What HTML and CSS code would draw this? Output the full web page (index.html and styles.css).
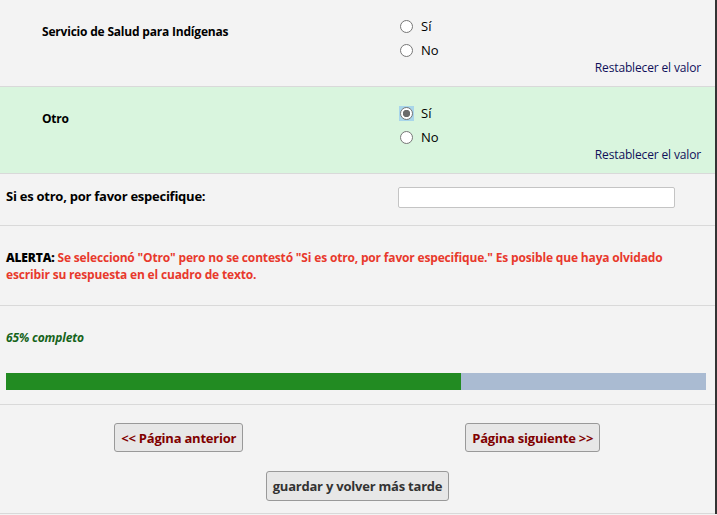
FILE: index.html
```html
<!DOCTYPE html>
<html lang="es">
<head>
  <meta charset="UTF-8">
  <meta name="viewport" content="width=device-width, initial-scale=1.0">
  <title>Encuesta</title>
  <link rel="stylesheet" href="styles.css">
</head>
<body>
  <div class="survey">
    <div class="row">
      <div class="q q-sub">Servicio de Salud para Indígenas</div>
      <div class="ans">
        <div class="opt"><span class="radio"></span>Sí</div>
        <div class="opt"><span class="radio"></span>No</div>
        <div class="reset"><a href="#">Restablecer el valor</a></div>
      </div>
    </div>

    <div class="row row-hl">
      <div class="q q-sub">Otro</div>
      <div class="ans">
        <div class="opt"><span class="focus"><span class="radio on"></span></span>Sí</div>
        <div class="opt"><span class="radio"></span>No</div>
        <div class="reset"><a href="#">Restablecer el valor</a></div>
      </div>
    </div>

    <div class="row row-text">
      <div class="q">Si es otro, por favor especifique:</div>
      <div class="ans"><input type="text" class="txt"></div>
    </div>

    <div class="alert">
      <b>ALERTA:</b> <span>Se seleccionó "Otro" pero no se contestó "Si es otro, por favor especifique." Es posible que haya olvidado escribir su respuesta en el cuadro de texto.</span>
    </div>

    <div class="progress">
      <p class="pct">65% completo</p>
      <div class="bar"><div class="fill" style="width:65%"></div></div>
    </div>

    <div class="nav">
      <div class="nav-cell"><button class="btn">&lt;&lt; Página anterior</button></div>
      <div class="nav-cell next"><button class="btn">Página siguiente &gt;&gt;</button></div>
      <div class="nav-save"><button class="btn save">guardar y volver más tarde</button></div>
    </div>
  </div>
</body>
</html>
```

FILE: styles.css
```css
*{margin:0;padding:0;box-sizing:border-box;}
html,body{background:#f3f3f3;}
body{font-family:"Open Sans",Arial,sans-serif;color:#000;font-size:13px;}
.survey{width:717px;border-right:2px solid #333;background:#f3f3f3;}

.row{display:grid;grid-template-columns:398px 1fr;border-bottom:1px solid #d9d9d9;}
.row-hl{background:#d9f5de;}
.q{font-weight:bold;font-size:12px;line-height:18px;letter-spacing:-0.2px;padding:23px 6px 0 6px;}
.q-sub{padding-left:42px;}
.ans{padding:14px 14px 12px 0;}
.opt{display:flex;align-items:center;height:24px;font-size:13px;}
.radio{display:inline-block;width:13px;height:13px;border:1px solid #777;border-radius:50%;background:#fff;margin:0 8px 0 2px;}
.radio.on{background:radial-gradient(circle,#6b6b6b 0 3.4px,#fff 4px);margin:0;}
.focus{display:inline-flex;background:#a9d6ea;padding:1px;margin:0 7px 0 1px;}
.reset{text-align:right;font-size:12px;line-height:14px;letter-spacing:-0.15px;margin-top:-1px;margin-bottom:-1px;}
.reset a{color:#10105a;text-decoration:none;}

.row-text{height:52px;}
.row-text .q{font-size:13px;letter-spacing:-0.25px;padding-top:13px;}
.row-text .ans{padding:13px 0 0 0;}
.txt{width:277px;height:21px;border:1px solid #c4c4c4;border-radius:2px;background:#fff;}

.alert{padding:23px 6px 22px;font-size:12px;line-height:17px;font-weight:bold;letter-spacing:-0.17px;border-bottom:1px solid #d9d9d9;}
.alert span{color:#e8392c;}

.progress{padding:24px 9px 14px 6px;border-bottom:1px solid #d9d9d9;}
.pct{font-size:12px;line-height:16px;font-weight:bold;font-style:italic;letter-spacing:-0.15px;color:#17641b;}
.bar{margin-top:27px;height:17px;background:#aabbd2;}
.fill{height:100%;background:#228b22;}

.nav{display:grid;grid-template-columns:1fr 1fr;row-gap:19px;padding:18px 0 12px;border-bottom:1px solid #d9d9d9;}
.nav-cell{text-align:center;}
.nav-cell.next{padding-right:7px;}
.nav-save{grid-column:1 / 3;text-align:center;}
.btn{font-family:"Open Sans",Arial,sans-serif;font-size:13px;font-weight:bold;letter-spacing:-0.22px;color:#800000;background:#e7e7e7;border:1px solid #999;border-radius:3px;padding:0 6px;height:29px;}
.save{color:#333;height:30px;}
```
